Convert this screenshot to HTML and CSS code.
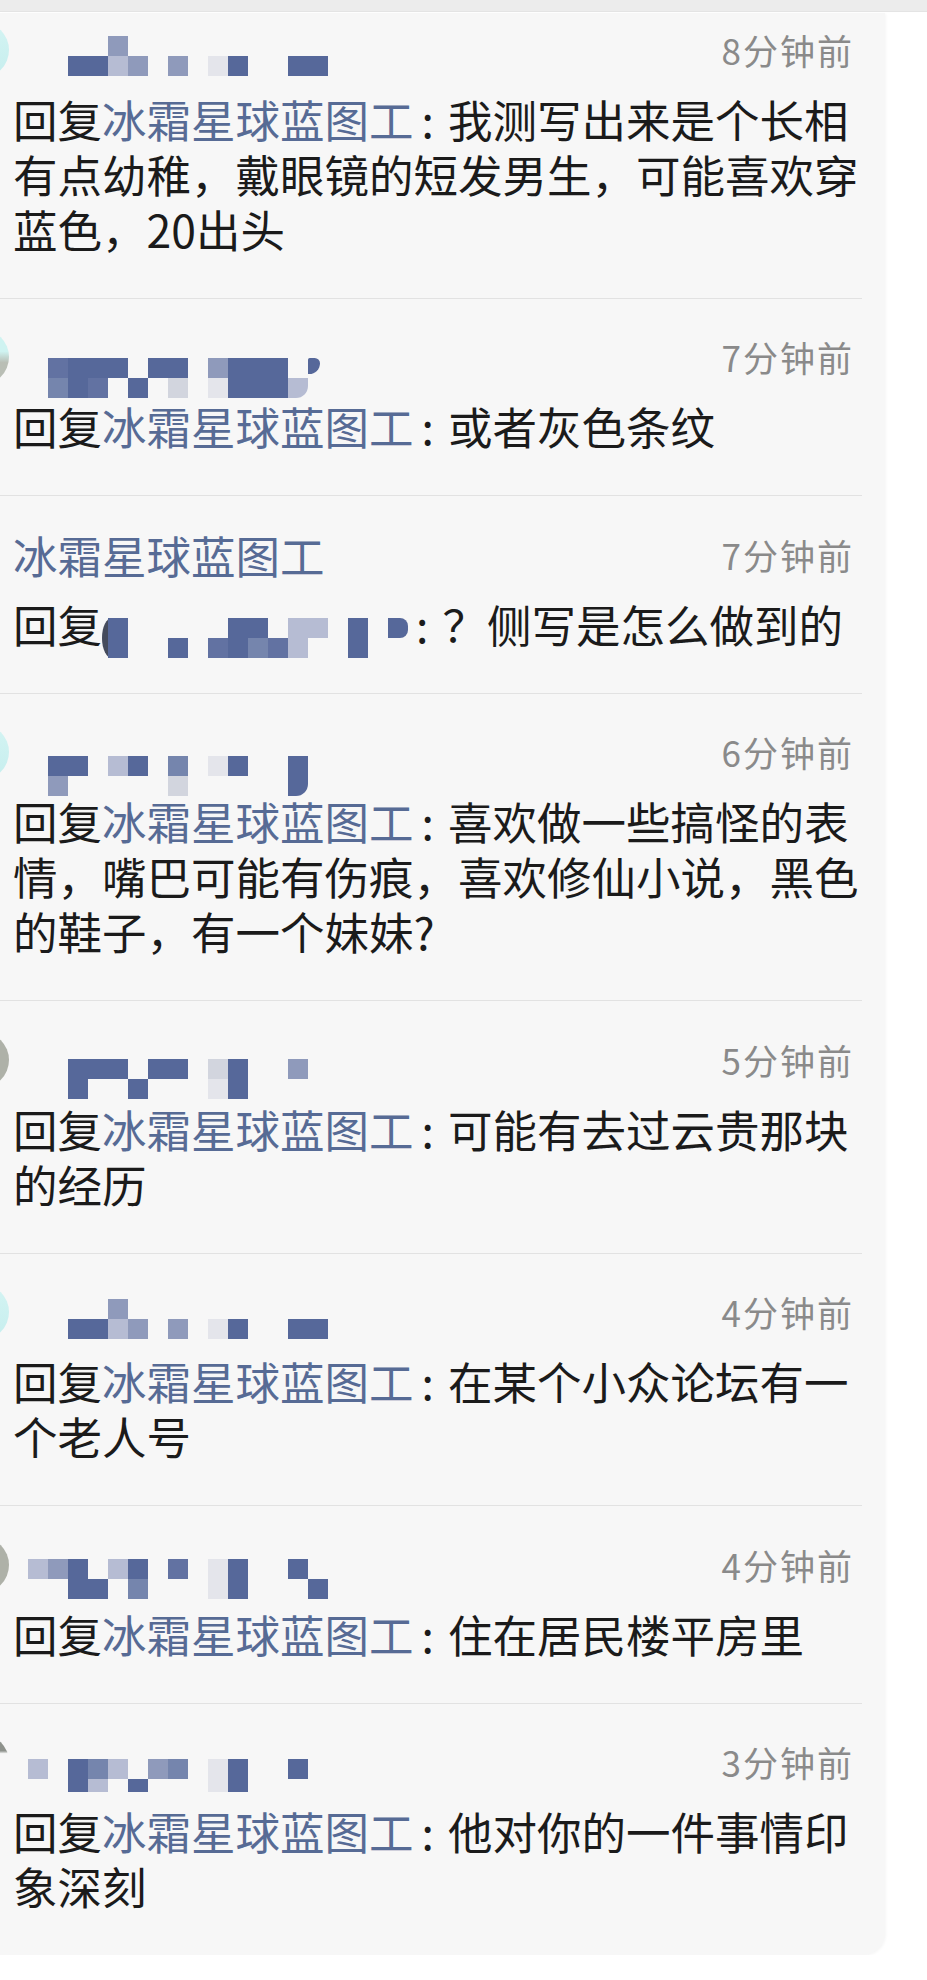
FILE: index.html
```html
<!DOCTYPE html>
<html lang="zh-CN">
  <head>
    <meta charset="UTF-8" />
    <meta name="viewport" content="width=device-width, initial-scale=1.0" />
    <title>回复</title>
    <link rel="stylesheet" href="styles.css">
  </head>
  <body>
    <div class="topbar"></div>
    <div class="card">
      <div class="item first">
        <div class="head">
          <span class="avatar av-cyan"></span>
          <div class="mosaic off8">
            <i></i><i></i><i></i><i></i><i class="g"></i><i></i><i></i><i></i><i></i><i></i><i></i><i></i><i></i><i></i><i></i>
            <i></i><i></i><i class="d"></i><i class="d"></i><i class="l"></i><i class="g"></i><i></i><i class="g"></i><i></i><i class="v"></i><i class="d"></i><i></i><i></i><i class="d"></i><i class="d"></i>
          </div>
          <span class="time">8分钟前</span>
        </div>
        <p class="text">回复<span class="name">冰霜星球蓝图工</span><span class="colon">:</span>我测写出来是个长相有点幼稚，戴眼镜的短发男生，可能喜欢穿蓝色，20出头</p>
      </div>

      <div class="item">
        <div class="head">
          <span class="avatar av-mix"></span>
          <div class="mosaic off23">
            <i></i><i class="n"></i><i class="d"></i><i class="d"></i><i class="d"></i><i></i><i class="d"></i><i class="d"></i><i></i><i class="g"></i><i class="d"></i><i class="d"></i><i class="d"></i><i></i><i class="d ap"></i>
            <i></i><i class="m"></i><i class="d"></i><i class="n"></i><i></i><i class="d"></i><i></i><i class="s"></i><i></i><i class="v"></i><i class="d"></i><i class="d"></i><i class="d"></i><i class="l rb"></i><i></i>
          </div>
          <span class="time">7分钟前</span>
        </div>
        <p class="text">回复<span class="name">冰霜星球蓝图工</span><span class="colon">:</span>或者灰色条纹</p>
      </div>

      <div class="item">
        <div class="head">
          <span class="uname">冰霜星球蓝图工</span>
          <span class="time">7分钟前</span>
        </div>
        <p class="text">回复<span class="mosaic inline">
            <i class="d"></i><i></i><i></i><i></i><i></i><i></i><i class="d"></i><i class="d"></i><i></i><i class="l"></i><i class="l"></i><i></i><i class="d"></i><i></i><i class="d rr"></i>
            <i class="d"></i><i></i><i></i><i class="d"></i><i></i><i class="n"></i><i class="d"></i><i class="m"></i><i class="n"></i><i class="l"></i><i></i><i></i><i class="d"></i><i></i><i></i>
          </span><span class="colon">:</span>？侧写是怎么做到的</p>
      </div>

      <div class="item">
        <div class="head">
          <span class="avatar av-cyan"></span>
          <div class="mosaic off26">
            <i></i><i class="d"></i><i class="d"></i><i></i><i class="l"></i><i class="d"></i><i></i><i class="m"></i><i></i><i class="v"></i><i class="d"></i><i></i><i></i><i class="d"></i><i></i>
            <i></i><i class="g"></i><i></i><i></i><i></i><i></i><i></i><i class="s"></i><i></i><i></i><i></i><i></i><i></i><i class="d rb"></i><i></i>
          </div>
          <span class="time">6分钟前</span>
        </div>
        <p class="text">回复<span class="name">冰霜星球蓝图工</span><span class="colon">:</span>喜欢做一些搞怪的表情，嘴巴可能有伤痕，喜欢修仙小说，黑色的鞋子，有一个妹妹?</p>
      </div>

      <div class="item">
        <div class="head">
          <span class="avatar av-gray"></span>
          <div class="mosaic off21">
            <i></i><i></i><i class="d"></i><i class="d"></i><i class="d"></i><i></i><i class="d"></i><i class="d"></i><i></i><i class="s"></i><i class="d"></i><i></i><i></i><i class="g"></i><i></i>
            <i></i><i></i><i class="d"></i><i></i><i></i><i class="d"></i><i></i><i></i><i></i><i class="v"></i><i class="d"></i><i></i><i></i><i></i><i></i>
          </div>
          <span class="time">5分钟前</span>
        </div>
        <p class="text">回复<span class="name">冰霜星球蓝图工</span><span class="colon">:</span>可能有去过云贵那块的经历</p>
      </div>

      <div class="item">
        <div class="head">
          <span class="avatar av-cyan"></span>
          <div class="mosaic off9">
            <i></i><i></i><i></i><i></i><i class="g"></i><i></i><i></i><i></i><i></i><i></i><i></i><i></i><i></i><i></i><i></i>
            <i></i><i></i><i class="d"></i><i class="d"></i><i class="l"></i><i class="g"></i><i></i><i class="g"></i><i></i><i class="v"></i><i class="d"></i><i></i><i></i><i class="d"></i><i class="d"></i>
          </div>
          <span class="time">4分钟前</span>
        </div>
        <p class="text">回复<span class="name">冰霜星球蓝图工</span><span class="colon">:</span>在某个小众论坛有一个老人号</p>
      </div>

      <div class="item">
        <div class="head">
          <span class="avatar av-gray"></span>
          <div class="mosaic off16">
            <i class="l"></i><i class="g"></i><i class="d"></i><i></i><i class="l"></i><i class="d"></i><i></i><i class="n"></i><i></i><i class="v"></i><i class="d"></i><i></i><i></i><i class="d"></i><i></i>
            <i></i><i></i><i class="d"></i><i class="d"></i><i></i><i class="m"></i><i></i><i></i><i></i><i class="v"></i><i class="d"></i><i></i><i></i><i></i><i class="d"></i>
          </div>
          <span class="time">4分钟前</span>
        </div>
        <p class="text">回复<span class="name">冰霜星球蓝图工</span><span class="colon">:</span>住在居民楼平房里</p>
      </div>

      <div class="item">
        <div class="head">
          <span class="avatar av-dark"></span>
          <div class="mosaic off19 short">
            <i class="l"></i><i></i><i class="d"></i><i class="m"></i><i class="l"></i><i></i><i class="g"></i><i class="m"></i><i></i><i class="v"></i><i class="d"></i><i></i><i></i><i class="d"></i><i></i>
            <i></i><i></i><i class="d"></i><i class="l"></i><i></i><i class="d"></i><i></i><i></i><i></i><i class="v"></i><i class="d"></i><i></i><i></i><i></i><i></i>
          </div>
          <span class="time">3分钟前</span>
        </div>
        <p class="text">回复<span class="name">冰霜星球蓝图工</span><span class="colon">:</span>他对你的一件事情印象深刻</p>
      </div>
    </div>
  </body>
</html>
```

FILE: styles.css
```css
body {
  margin: 0;
  background: #fff;
  font-family: "Noto Sans CJK SC", "Noto Sans", sans-serif;
}
.topbar {
  height: 11px;
  background: #ececec;
  border-bottom: 1px solid #e4e4e4;
}
.card {
  width: 885px;
  margin-top: 1px;
  background: #f7f7f7;
  border-bottom-right-radius: 22px;
  box-shadow: 1px 1px 3px rgba(0, 0, 0, 0.04);
  overflow: hidden;
}
.item {
  box-sizing: border-box;
  width: 862px;
  padding: 36.5px 0 42px 13px;
  border-bottom: 1px solid #e2e2e2;
}
.item.first {
  padding-top: 14.5px;
}
.item:last-child {
  border-bottom: none;
}
.head {
  display: flex;
  align-items: center;
  height: 44px;
  padding-right: 8px;
}
.avatar {
  flex: none;
  width: 56px;
  height: 56px;
  margin-left: -60px;
  border-radius: 50%;
}
.av-cyan {
  background: linear-gradient(#d4f4f3, #c6eeee);
}
.av-mix {
  background: linear-gradient(#cff3f1 40%, #b9beb5 60%);
}
.av-gray {
  background: #aeb1a8;
}
.av-dark {
  background: linear-gradient(#8e928c 30%, #f7f7f7 35%);
}
.time {
  margin-left: auto;
  font-size: 35px;
  line-height: 44px;
  letter-spacing: 2px;
  color: #8a8a8a;
}
.uname {
  font-size: 44.5px;
  line-height: 44px;
  color: #576b95;
}
.text {
  margin: 19px 0 0;
  font-size: 44.5px;
  line-height: 55px;
  color: #1b1b1b;
}
.name {
  color: #576b95;
}
.colon {
  padding: 0 14px 0 8px;
}

/* pixelated user names */
.mosaic {
  display: grid;
  grid-template-columns: repeat(15, 20px);
  grid-auto-rows: 20px;
  align-self: flex-start;
  margin-left: 19px;
}
.mosaic i {
  display: block;
}
.mosaic.short {
  grid-template-rows: 20px 13px;
}
.mosaic.inline {
  display: inline-grid;
  vertical-align: top;
  margin: 22px 0 -7px 0;
  border-left: 6px solid #454b5c;
  border-radius: 10px 0 0 10px / 20px 0 0 20px;
}
.off8 { margin-top: 8px; }
.off9 { margin-top: 9px; }
.off16 { margin-top: 16px; }
.off19 { margin-top: 19px; }
.off21 { margin-top: 21px; }
.off23 { margin-top: 23px; }
.off26 { margin-top: 26px; }

.d { background: #56689a; }
.n { background: #6272a2; }
.m { background: #7585ad; }
.g { background: #8f9abb; }
.l { background: #b6bcd3; }
.s { background: #d2d5de; }
.v { background: #e4e5eb; }
.rb { border-bottom-right-radius: 12px; }
.rr { border-radius: 0 8px 8px 0; }
.ap {
  width: 12px;
  height: 16px;
  border-radius: 2px 6px 12px 0;
}
```
